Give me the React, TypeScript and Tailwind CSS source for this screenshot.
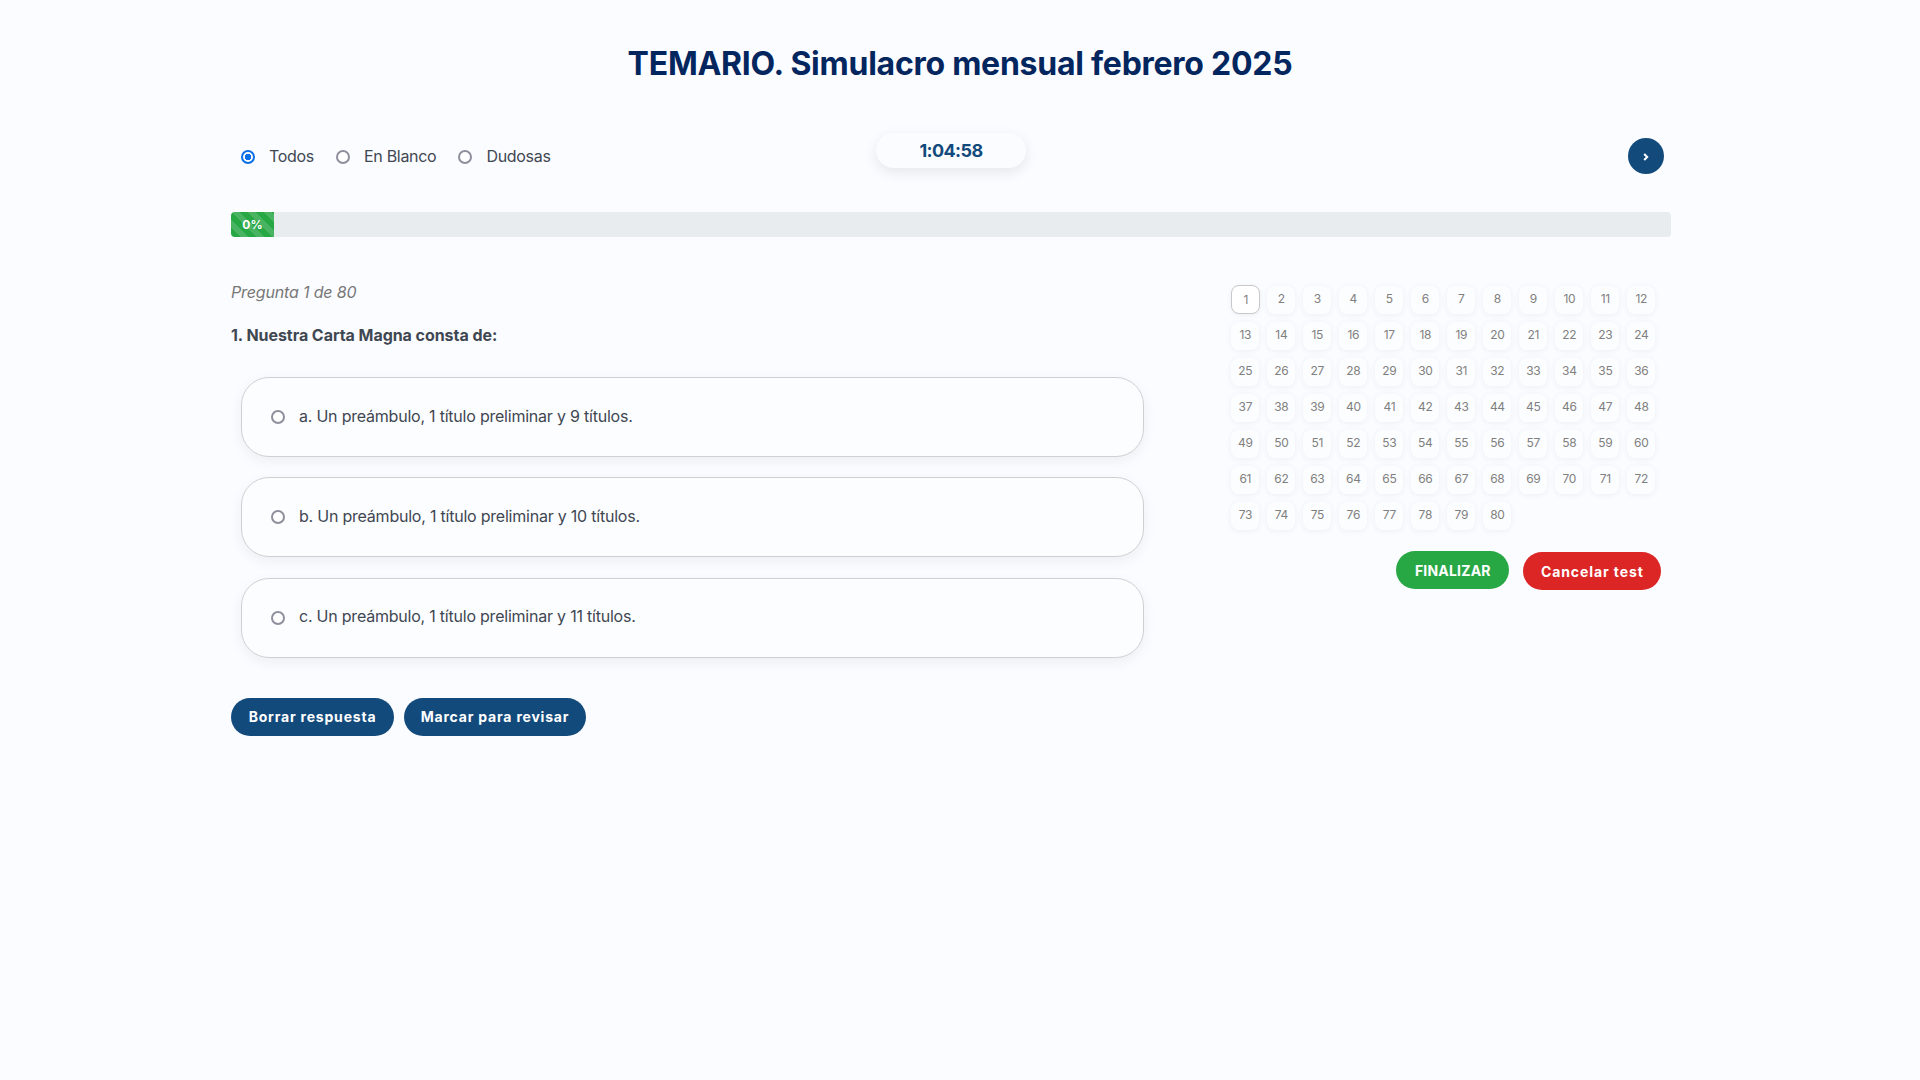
import React from 'react';

const OPTIONS = [
  'a. Un preámbulo, 1 título preliminar y 9 títulos.',
  'b. Un preámbulo, 1 título preliminar y 10 títulos.',
  'c. Un preámbulo, 1 título preliminar y 11 títulos.',
];

const FILTERS = ['Todos', 'En Blanco', 'Dudosas'];

const NUMBERS = Array.from({ length: 80 }, (_, i) => i + 1);

const radioClass =
  "m-0 h-3.5 w-3.5 shrink-0 appearance-none rounded-full border-2 border-[#8f8f9d] bg-white checked:border-[#0b6fe8] checked:bg-[radial-gradient(circle,#0b6fe8_0,#0b6fe8_3px,white_3.5px)]";

export default function App() {
  return (
    <div className="min-h-[1080px] bg-[#fbfcff] font-['Inter','Liberation_Sans',sans-serif] text-[#3f4752]">
      <h1 className="pt-[44px] h-[133px] text-center text-[32px] leading-[40px] font-bold tracking-[-0.25px] text-[#04265f]">
        TEMARIO. Simulacro mensual febrero 2025
      </h1>

      <div className="w-[1440px] ml-[231px]">
        <div className="relative flex h-[79px] justify-between pr-[7px] pl-[10px]">
          <div className="flex h-[46px] items-center gap-[22px]">
            {FILTERS.map((f, i) => (
              <label key={f} className="flex items-center gap-[14px] text-[16px] leading-6">
                <input type="radio" name="filtro" defaultChecked={i === 0} className={radioClass + ' mt-[1px]'} />
                <span className="-mt-[1px] tracking-[-0.3px]">{f}</span>
              </label>
            ))}
          </div>
          <div className="absolute left-[645px] top-0 flex h-[35px] w-[150px] items-center justify-center rounded-[18px] bg-[#fbfcff] text-[18px] font-bold tracking-[-0.6px] text-[#134a7c] shadow-[0_4px_14px_rgba(0,0,0,0.09)]">
            1:04:58
          </div>
          <button className="mt-[5px] flex h-9 w-9 items-center justify-center rounded-full bg-[#134a7c]">
            <svg className="mt-[1px]" width="10" height="10" viewBox="0 0 10 10" fill="none" stroke="white" strokeWidth="2">
              <path d="M3.2 2 6.2 5 3.2 8" />
            </svg>
          </button>
        </div>

        <div className="flex h-[25px] overflow-hidden rounded-[4px] bg-[#e9ecef]">
          <div className="flex w-[43px] items-center justify-center bg-[#28a745] bg-[linear-gradient(45deg,rgba(255,255,255,.15)_25%,transparent_25%,transparent_50%,rgba(255,255,255,.15)_50%,rgba(255,255,255,.15)_75%,transparent_75%,transparent)] bg-[length:16px_16px] text-[12px] font-bold text-white">
            0%
          </div>
        </div>

        <div className="mt-[43px] flex">
          <div className="w-[920px]">
            <p className="text-[16px] leading-6 italic text-[#777] tracking-[-0.15px]">Pregunta 1 de 80</p>
            <p className="mt-[19px] text-[16px] leading-6 font-bold tracking-[-0.05px]">1. Nuestra Carta Magna consta de:</p>
            <div className="mt-[30px] flex flex-col gap-[20.4px] pl-[10px] pr-[6px]">
              {OPTIONS.map((o) => (
                <label
                  key={o}
                  className="flex h-[80px] items-center gap-[14px] rounded-[28px] border border-[#d0d0d3] bg-[#fcfdff] pl-[29px] text-[16px] shadow-[0_4px_14px_rgba(0,0,0,0.06)]"
                >
                  <input type="radio" name="respuesta" className={radioClass} />
                  <span className="-mt-[3px] tracking-[-0.22px]">{o}</span>
                </label>
              ))}
            </div>
            <div className="mt-[40px] flex gap-[10px]">
              <button className="h-[38px] w-[163px] rounded-[19px] bg-[#134a7c] text-[14px] font-bold tracking-[0.8px] text-white">
                Borrar respuesta
              </button>
              <button className="h-[38px] w-[182px] rounded-[19px] bg-[#134a7c] text-[14px] font-bold tracking-[0.8px] text-white">
                Marcar para revisar
              </button>
            </div>
          </div>

          <div className="ml-[81px] w-[440px] pt-[6px]">
            <div className="grid grid-cols-[repeat(12,28px)] gap-2">
              {NUMBERS.map((n) => (
                <div
                  key={n}
                  className={
                    n === 1
                      ? 'flex h-[29px] w-[29px] -mt-px items-center justify-center rounded-[8px] border border-[#c8c8c8] bg-white text-[12px] tracking-[-0.3px] text-[#808080] shadow-[0_1px_5px_rgba(0,0,0,0.06)]'
                      : 'flex h-7 w-7 items-center justify-center rounded-[8px] bg-[#fcfdff] pb-[2px] text-[12px] tracking-[-0.3px] text-[#808080] shadow-[0_1px_6px_rgba(0,0,0,0.06)]'
                  }
                >
                  {n}
                </div>
              ))}
            </div>
            <div className="mt-[21px] flex w-[431px] items-start justify-end gap-[14px] pr-[1px]">
              <button className="h-[38px] w-[113px] rounded-[19px] bg-[#28a745] text-[14px] font-bold tracking-[0.2px] text-white">
                FINALIZAR
              </button>
              <button className="mt-[1px] h-[38px] w-[138px] rounded-[19px] bg-[#dc2626] text-[14px] font-bold tracking-[0.9px] text-white">
                Cancelar test
              </button>
            </div>
          </div>
        </div>
      </div>
    </div>
  );
}
